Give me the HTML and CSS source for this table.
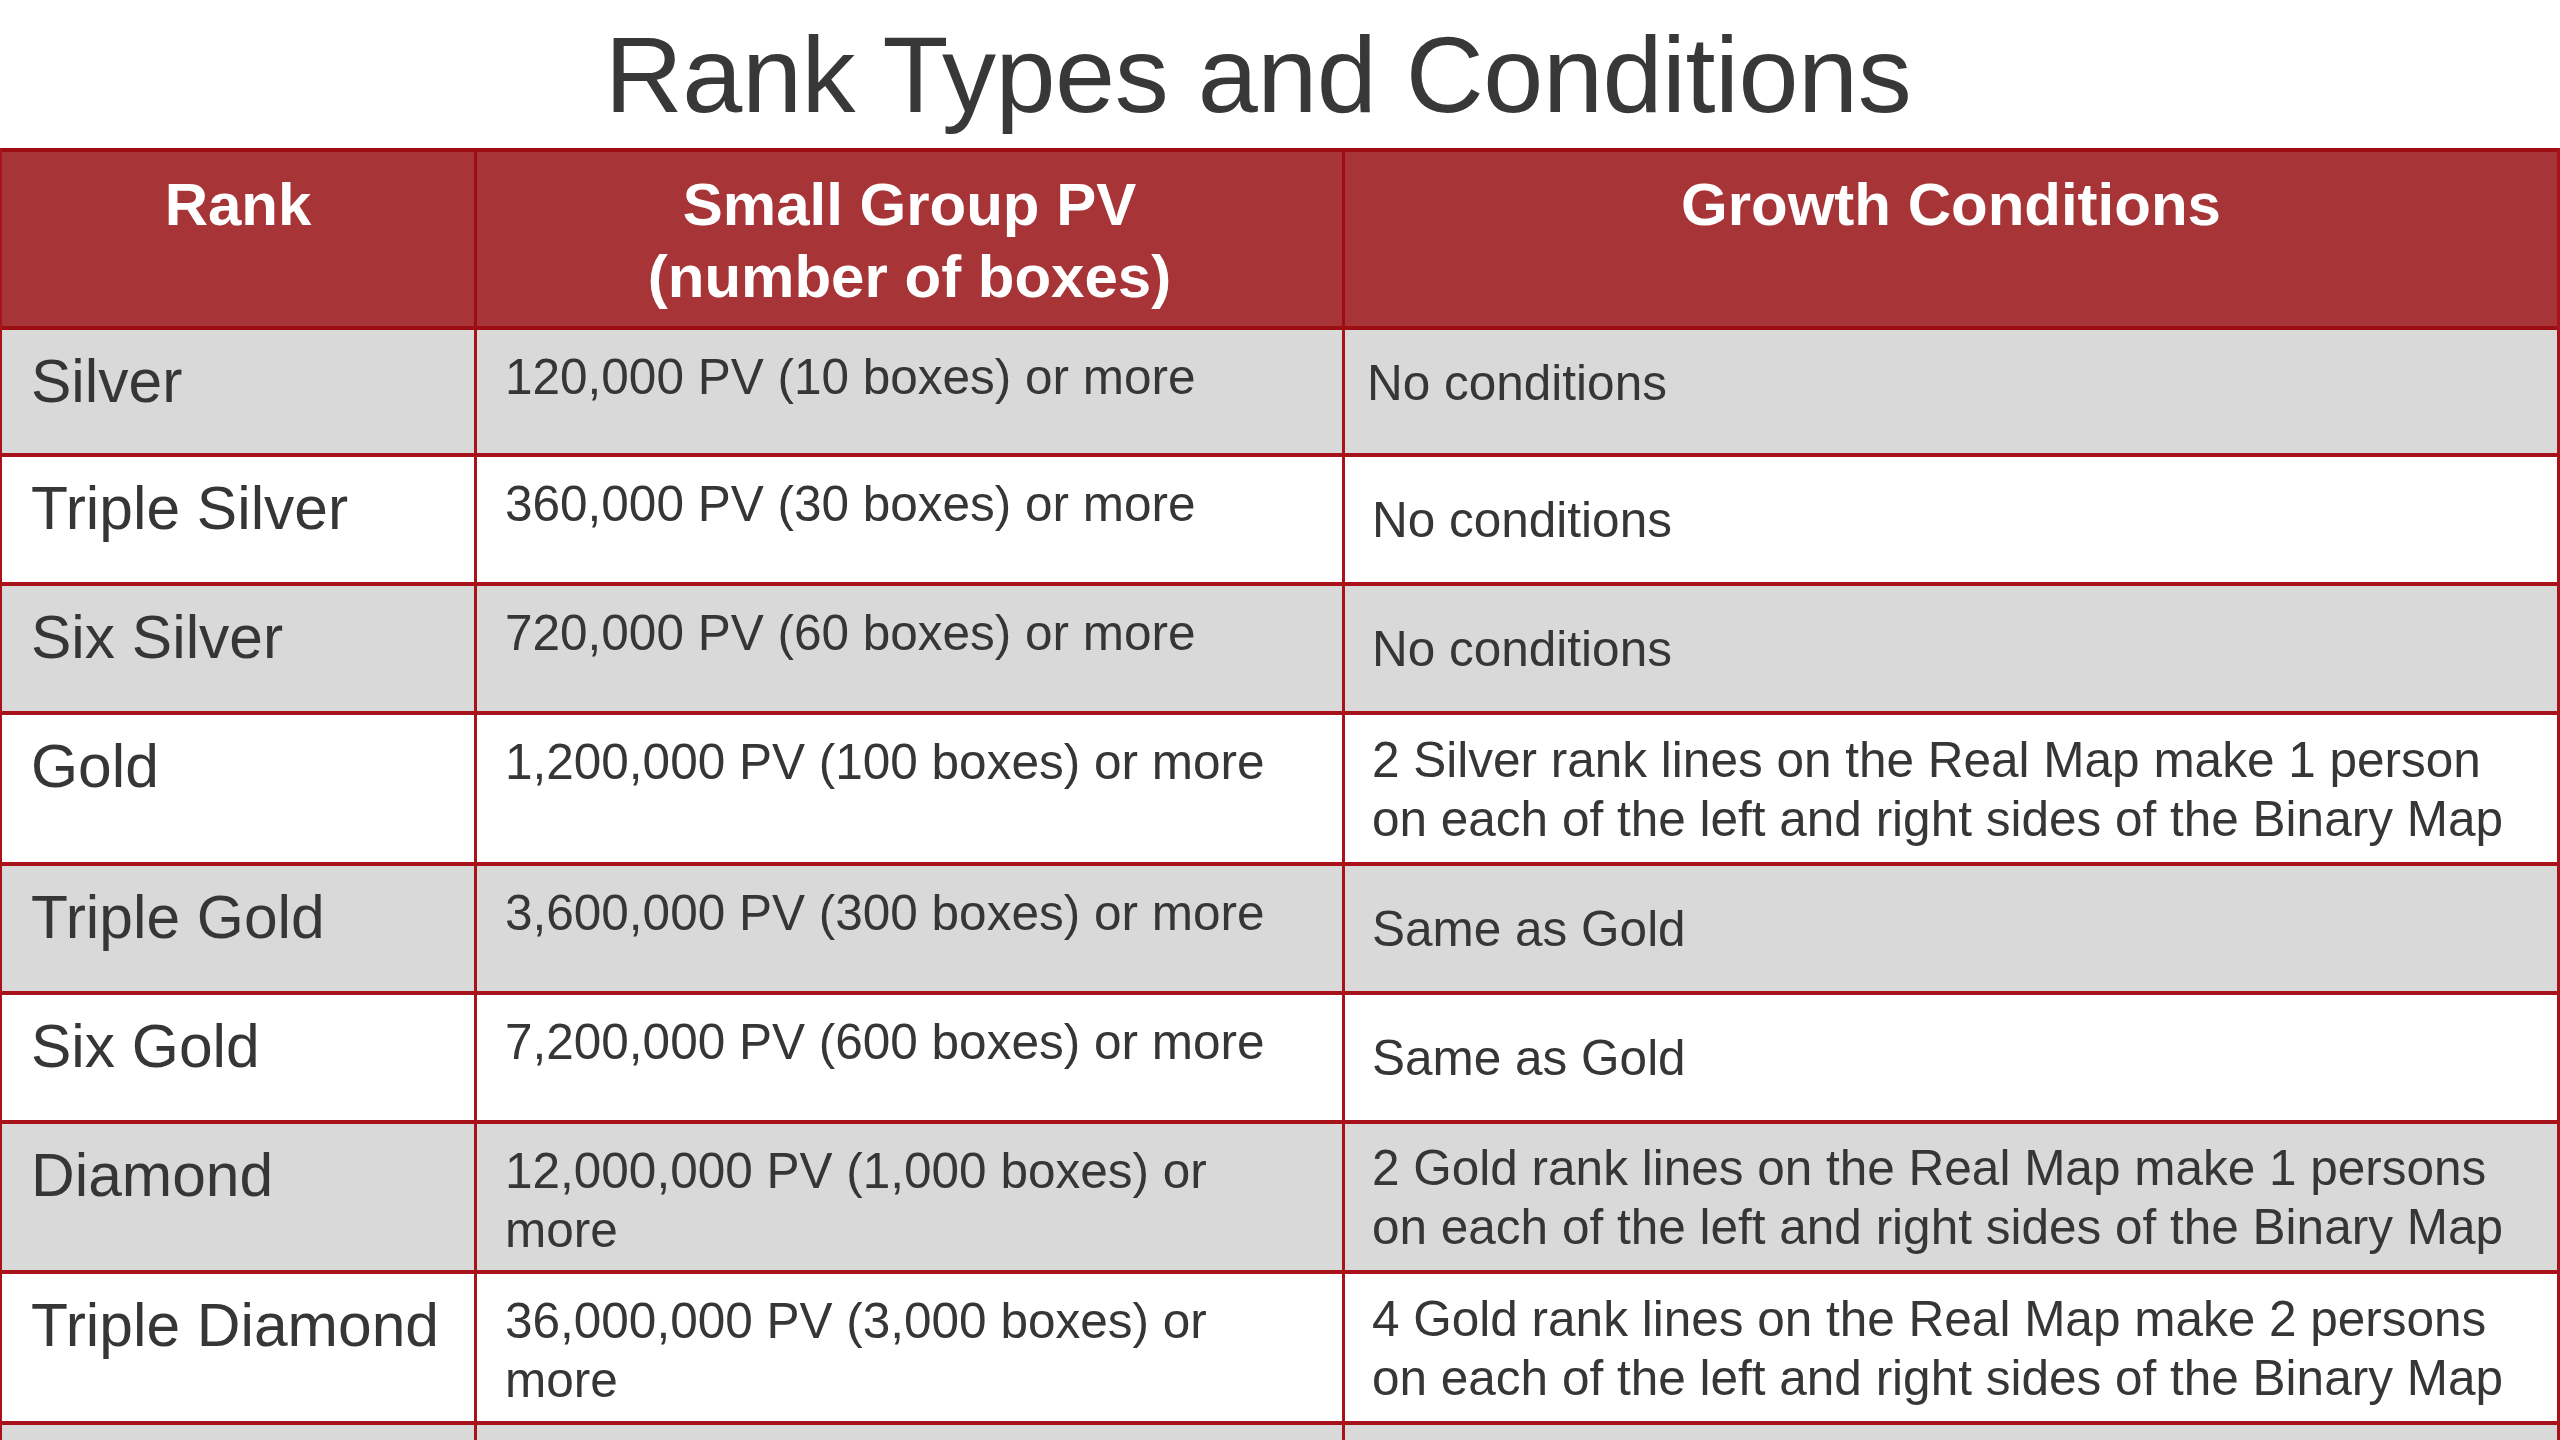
FILE: index.html
```html
<!DOCTYPE html>
<html lang="en">
<head>
<meta charset="utf-8">
<title>Rank Types and Conditions</title>
<link rel="stylesheet" href="styles.css">
</head>
<body>
<main class="slide">
  <h1 class="title">Rank Types and Conditions</h1>
  <div class="table">
    <div class="row row--head">
      <div class="cell head">Rank</div>
      <div class="cell head">Small Group PV<br>(number of boxes)</div>
      <div class="cell head">Growth Conditions</div>
    </div>
    <div class="row row--first row--gray">
      <div class="cell rank">Silver</div>
      <div class="cell pv">120,000 PV (10 boxes) or more</div>
      <div class="cell cond cond--raised">No conditions</div>
    </div>
    <div class="row">
      <div class="cell rank">Triple Silver</div>
      <div class="cell pv">360,000 PV (30 boxes) or more</div>
      <div class="cell cond">No conditions</div>
    </div>
    <div class="row row--gray">
      <div class="cell rank">Six Silver</div>
      <div class="cell pv">720,000 PV (60 boxes) or more</div>
      <div class="cell cond">No conditions</div>
    </div>
    <div class="row row--tall">
      <div class="cell rank">Gold</div>
      <div class="cell pv">1,200,000 PV (100 boxes) or more</div>
      <div class="cell cond">2 Silver rank lines on the Real Map make 1 person on each of the left and right sides of the Binary Map</div>
    </div>
    <div class="row row--gray">
      <div class="cell rank">Triple Gold</div>
      <div class="cell pv">3,600,000 PV (300 boxes) or more</div>
      <div class="cell cond">Same as Gold</div>
    </div>
    <div class="row">
      <div class="cell rank">Six Gold</div>
      <div class="cell pv">7,200,000 PV (600 boxes) or more</div>
      <div class="cell cond">Same as Gold</div>
    </div>
    <div class="row row--tall row--gray row--short-tall">
      <div class="cell rank">Diamond</div>
      <div class="cell pv">12,000,000 PV (1,000 boxes) or more</div>
      <div class="cell cond">2 Gold rank lines on the Real Map make 1 persons on each of the left and right sides of the Binary Map</div>
    </div>
    <div class="row row--tall">
      <div class="cell rank">Triple Diamond</div>
      <div class="cell pv">36,000,000 PV (3,000 boxes) or more</div>
      <div class="cell cond">4 Gold rank lines on the Real Map make 2 persons on each of the left and right sides of the Binary Map</div>
    </div>
    <div class="row row--gray row--cut">
      <div class="cell rank"></div>
      <div class="cell pv"></div>
      <div class="cell cond"></div>
    </div>
  </div>
</main>
</body>
</html>
```

FILE: styles.css
```css
html, body {
  margin: 0;
  padding: 0;
  background: #ffffff;
  overflow: hidden;
}

.slide {
  width: 2560px;
  height: 1440px;
  overflow: hidden;
  font-family: "Liberation Sans", Arial, Helvetica, sans-serif;
  color: #363636;
}

.title {
  margin: 0 0 19px 0;
  padding: 21px 44px 0 0;
  font-size: 108px;
  line-height: 108px;
  font-weight: 400;
  letter-spacing: -0.5px;
  text-align: center;
  color: #383838;
}

.table {
  border-left: 2px solid #a8121a;
  border-right: 3px solid #a8121a;
}

.row {
  display: grid;
  grid-template-columns: 475px 868px 1fr;
  box-sizing: border-box;
  height: 129px;
  border-bottom: 4px solid #a8121a;
  background: #ffffff;
}

.row--gray {
  background: #d9d9d9;
}

.row--first {
  height: 127px;
}

.row--tall {
  height: 151px;
}

.row--short-tall {
  height: 150px;
}

.row--cut {
  height: 140px;
  border-bottom: none;
}

.row--head {
  height: 182px;
  background: #a73537;
  border-top: 4px solid #9c0e14;
  border-bottom-color: #9c0e14;
}

.cell {
  box-sizing: border-box;
  border-right: 3px solid #a8121a;
  min-width: 0;
}

.cell:last-child {
  border-right: none;
}

.head {
  padding-top: 17px;
  font-size: 60px;
  line-height: 72px;
  font-weight: 700;
  color: #ffffff;
  text-align: center;
  border-right-color: #9c0e14;
}

.rank {
  padding: 16px 10px 0 29px;
  font-size: 60.5px;
  line-height: 70px;
}

.pv {
  padding: 17px 40px 0 28px;
  font-size: 49.5px;
  line-height: 59px;
}

.cond {
  display: flex;
  align-items: center;
  padding: 0 30px 0 27px;
  font-size: 49.5px;
  line-height: 59px;
}

.cond--raised {
  padding-left: 22px;
  padding-bottom: 18px;
}
```
